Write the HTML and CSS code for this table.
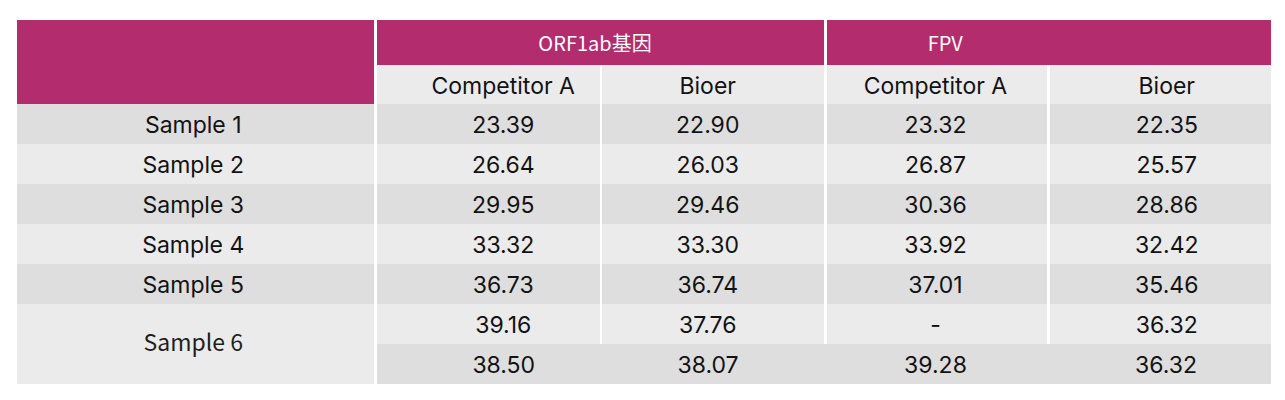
FILE: index.html
```html
<!DOCTYPE html>
<html lang="zh">
<head>
<meta charset="utf-8">
<title>Ct 对比</title>
<link rel="stylesheet" href="styles.css">
</head>
<body>
<div class="page">
<table class="ct">
  <colgroup>
    <col class="c1"><col class="c2"><col class="c3"><col class="c4"><col class="c5">
  </colgroup>
  <thead>
    <tr class="h1">
      <th class="corner" rowspan="2"></th>
      <th class="group orf" colspan="2">ORF1ab基因</th>
      <th class="group fpv" colspan="2">FPV</th>
    </tr>
    <tr class="h2">
      <th class="k2">Competitor A</th><th class="k3">Bioer</th><th class="k4">Competitor A</th><th class="k5">Bioer</th>
    </tr>
  </thead>
  <tbody>
    <tr class="dark"><td class="name">Sample 1</td><td class="k2">23.39</td><td class="k3">22.90</td><td class="k4">23.32</td><td class="k5">22.35</td></tr>
    <tr class="light"><td class="name">Sample 2</td><td class="k2">26.64</td><td class="k3">26.03</td><td class="k4">26.87</td><td class="k5">25.57</td></tr>
    <tr class="dark"><td class="name">Sample 3</td><td class="k2">29.95</td><td class="k3">29.46</td><td class="k4">30.36</td><td class="k5">28.86</td></tr>
    <tr class="light"><td class="name">Sample 4</td><td class="k2">33.32</td><td class="k3">33.30</td><td class="k4">33.92</td><td class="k5">32.42</td></tr>
    <tr class="dark"><td class="name">Sample 5</td><td class="k2">36.73</td><td class="k3">36.74</td><td class="k4">37.01</td><td class="k5">35.46</td></tr>
    <tr class="light"><td class="name alt" rowspan="2">Sample 6</td><td class="k2">39.16</td><td class="k3">37.76</td><td class="k4">-</td><td class="k5">36.32</td></tr>
    <tr class="dark last"><td class="k2">38.50</td><td class="k3">38.07</td><td class="k4">39.28</td><td class="k5">36.32</td></tr>
  </tbody>
</table>
</div>
</body>
</html>
```

FILE: styles.css
```css
html, body {
  margin: 0;
  padding: 0;
  background: #ffffff;
}

.page {
  padding: 20px 0 0 17px;
}

.ct {
  border-collapse: collapse;
  table-layout: fixed;
  width: 1254px;
  font-family: Inter, "Liberation Sans", sans-serif;
  font-size: 23px;
  color: #121212;
}

.c1 { width: 358px; }
.c2 { width: 226px; }
.c3 { width: 224px; }
.c4 { width: 223px; }
.c5 { width: 223px; }

.ct th,
.ct td {
  padding: 0;
  text-align: center;
  vertical-align: middle;
  font-weight: 400;
  line-height: 1;
  border: none;
}

/* vertical white separators */
.ct .corner,
.ct .name {
  border-right: 3px solid #ffffff;
}
.ct .k3 { border-left: 2px solid #ffffff; }
.ct .k4 { border-left: 3px solid #ffffff; }
.ct .k5 { border-left: 3px solid #ffffff; }
.ct .fpv { border-left: 3px solid #ffffff; }

.h1 th {
  height: 45px;
  background: #b32c6e;
  color: #ffffff;
  font-family: "Noto Sans CJK SC", "Noto Sans", sans-serif;
  font-size: 20px;
}

.h2 th {
  height: 36px;
  padding-top: 3px;
  background: #ebebeb;
}

.ct td {
  height: 37px;
  padding-top: 3px;
}

/* text offsets within columns, as in the source layout */
.ct .name { padding-right: 4px; }
.ct .k2 { padding-left: 30px; }
.ct .k3 { padding-right: 10px; }
.ct .k4 { padding-right: 2px; }
.ct .k5 { padding-left: 13px; }
.ct .orf { padding-right: 10px; }
.ct .fpv { padding-right: 207px; }

.dark td { background: #dedede; }
.light td { background: #ebebeb; }

.ct td.alt {
  background: #ebebeb;
  font-family: "Noto Sans CJK SC", "Noto Sans", sans-serif;
  font-size: 23px;
  color: #1e1e1e;
  padding-top: 0;
  padding-bottom: 6px;
}

.ct .last td {
  border-left: none;
}
```
